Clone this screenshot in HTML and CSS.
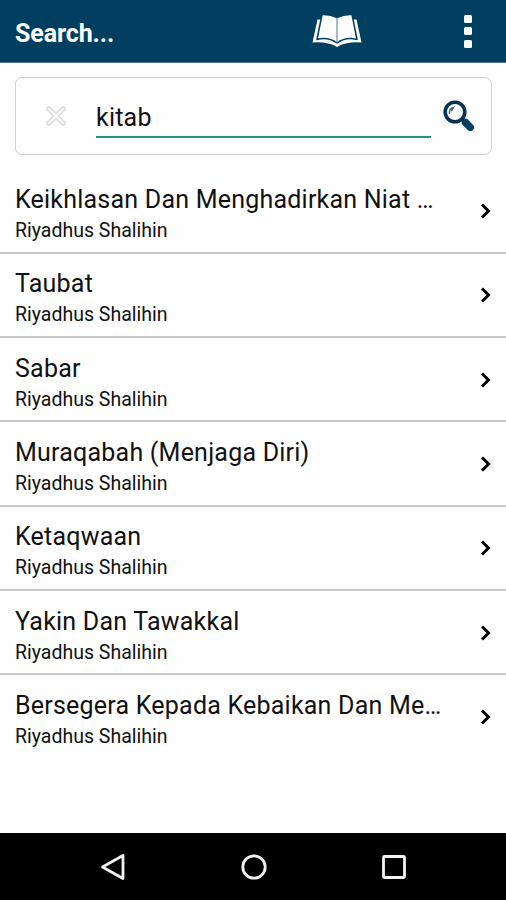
FILE: index.html
```html
<!DOCTYPE html>
<html lang="id">
<head>
<meta charset="utf-8">
<meta name="viewport" content="width=device-width, initial-scale=1">
<title>Search...</title>
<link rel="stylesheet" href="styles.css">
</head>
<body>
<header class="bar">
  <h1 class="bar-title">Search...</h1>
  <svg class="book" viewBox="0 0 50 34" width="50" height="34">
    <path fill="#fff" d="M5.500 5.500L.5 28.500Q16 27.500 25 33Q34 27.500 49.500 28.500L44.500 5.500Z"/>
    <path fill="#fff" stroke="#003f60" stroke-width="1.500" stroke-linejoin="round" d="M10 .5Q18 0 25 3.500Q32 0 40 .5L45 25.500Q34 22.500 25 29Q16 22.500 5 25.500Z"/>
    <path fill="none" stroke="#4d7891" stroke-width="1" d="M25 3.500V29"/>
  </svg>
  <div class="more"><i></i><i></i><i></i></div>
</header>
<main class="content">
  <div class="search">
    <svg class="clear" viewBox="0 0 22 22" width="22" height="22">
      <path fill="none" stroke="#d4d4d4" stroke-width="4.600" stroke-linecap="round" d="M3.500 3.500L18.500 18.500M18.500 3.500L3.500 18.500"/>
      <path fill="none" stroke="#fff" stroke-width="2.400" stroke-linecap="round" d="M3.500 3.500L18.500 18.500M18.500 3.500L3.500 18.500"/>
    </svg>
    <div class="field">kitab</div>
    <svg class="lens" viewBox="0 0 32 32" width="32" height="32">
      <path stroke="#063253" stroke-width="3" d="M18 18L22 22"/>
      <path stroke="#063d60" stroke-width="7.500" stroke-linecap="round" d="M22.500 22.500L27.300 27.300"/>
      <circle cx="12" cy="12" r="9.800" fill="#fff" stroke="#063253" stroke-width="3.600"/>
      <path fill="none" stroke="#43627d" stroke-width="1.500" stroke-linecap="round" d="M6.500 13.500Q6 8.500 10.500 7.500L8.800 10.500"/>
    </svg>
  </div>
  <ul class="list">
    <li class="row"><div class="text"><div class="name">Keikhlasan Dan Menghadirkan Niat …</div><div class="sub">Riyadhus Shalihin</div></div><svg class="arrow" viewBox="0 0 12 18"><path d="M2 2.500L8.500 9L2 15.500"/></svg></li>
    <li class="row"><div class="text"><div class="name">Taubat</div><div class="sub">Riyadhus Shalihin</div></div><svg class="arrow" viewBox="0 0 12 18"><path d="M2 2.500L8.500 9L2 15.500"/></svg></li>
    <li class="row"><div class="text"><div class="name">Sabar</div><div class="sub">Riyadhus Shalihin</div></div><svg class="arrow" viewBox="0 0 12 18"><path d="M2 2.500L8.500 9L2 15.500"/></svg></li>
    <li class="row"><div class="text"><div class="name">Muraqabah (Menjaga Diri)</div><div class="sub">Riyadhus Shalihin</div></div><svg class="arrow" viewBox="0 0 12 18"><path d="M2 2.500L8.500 9L2 15.500"/></svg></li>
    <li class="row"><div class="text"><div class="name">Ketaqwaan</div><div class="sub">Riyadhus Shalihin</div></div><svg class="arrow" viewBox="0 0 12 18"><path d="M2 2.500L8.500 9L2 15.500"/></svg></li>
    <li class="row"><div class="text"><div class="name">Yakin Dan Tawakkal</div><div class="sub">Riyadhus Shalihin</div></div><svg class="arrow" viewBox="0 0 12 18"><path d="M2 2.500L8.500 9L2 15.500"/></svg></li>
    <li class="row"><div class="text"><div class="name">Bersegera Kepada Kebaikan Dan Me…</div><div class="sub">Riyadhus Shalihin</div></div><svg class="arrow" viewBox="0 0 12 18"><path d="M2 2.500L8.500 9L2 15.500"/></svg></li>
  </ul>
</main>
<nav class="nav">
  <svg viewBox="0 0 28 28"><path d="M24 2.500V25.500L3.500 14Z"/></svg>
  <svg viewBox="0 0 28 28"><circle cx="14" cy="14" r="11.200"/></svg>
  <svg viewBox="0 0 28 28"><rect x="3.500" y="3.500" width="21" height="21" rx="1"/></svg>
</nav>
</body>
</html>
```
FILE: styles.css
```css
* { box-sizing: border-box; }
body {
  margin: 0;
  height: 900px;
  display: flex;
  flex-direction: column;
  overflow: hidden;
  background: #fefefe;
  color: #111;
  font-family: Roboto, "Liberation Sans", sans-serif;
}
.bar {
  height: 63px;
  flex: none;
  display: flex;
  align-items: center;
  padding: 0 34px 0 15px;
  background: #003f60;
  border-bottom: 1px solid #5b7590;
}
.bar-title {
  margin: 6px 0 0;
  width: 297px;
  color: #fff;
  font-size: 25px;
  font-weight: 700;
  line-height: 30px;
  letter-spacing: -0.1px;
}
.book { flex: none; }
.more {
  margin-left: auto;
  display: flex;
  flex-direction: column;
  gap: 4.500px;
}
.more i {
  width: 8px;
  height: 8px;
  border-radius: 1.500px;
  background: #fff;
}
.content { flex: 1; min-height: 0; }
.search {
  height: 78px;
  margin: 14px 14px 0 14.500px;
  display: flex;
  align-items: center;
  padding: 0 15px 0 29.500px;
  border: 1.500px solid #cfd0d2;
  border-radius: 7px;
}
.clear { flex: none; }
.field {
  width: 335px;
  height: 43px;
  margin: 0 11.500px 0 29px;
  border-bottom: 2px solid #219583;
  font-size: 25px;
  line-height: 45px;
  letter-spacing: 0.22px;
}
.lens { flex: none; }
.list {
  list-style: none;
  margin: 14.200px 0 0;
  padding: 0;
}
.row {
  height: 84.350px;
  display: flex;
  align-items: center;
  justify-content: space-between;
  padding: 1px 14px 0 15px;
  border-bottom: 2px solid #c8c8c8;
}
.row:last-child { border-bottom-color: transparent; }
.text { padding-top: 7px; }
.name {
  font-size: 25px;
  line-height: 31px;
  letter-spacing: 0.22px;
  white-space: nowrap;
}
.sub {
  font-size: 19.500px;
  line-height: 31px;
  margin-bottom: -1px;
  white-space: nowrap;
}
.arrow { width: 12px; height: 18px; flex: none; }
.arrow path { fill: none; stroke: #000; stroke-width: 3; }
.nav {
  height: 67px;
  flex: none;
  display: flex;
  align-items: center;
  justify-content: space-between;
  padding: 0 98px 0 99px;
  background: #000;
}
.nav svg { width: 28px; height: 28px; }
.nav svg * { fill: none; stroke: #f2f2f2; stroke-width: 2.800; stroke-linejoin: round; }
```
